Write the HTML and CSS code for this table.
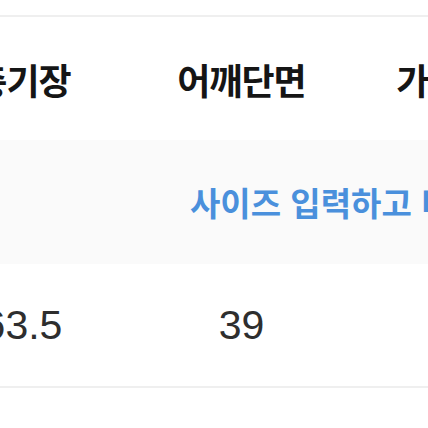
FILE: index.html
```html
<!DOCTYPE html>
<html lang="ko">
<head>
<meta charset="utf-8">
<link rel="stylesheet" href="styles.css">
</head>
<body>
<div class="page">
  <div class="top-space"></div>
  <div class="rule"></div>
  <div class="row head-row">
    <div class="cell">총기장</div>
    <div class="cell">어깨단면</div>
    <div class="cell">가슴단면</div>
  </div>
  <div class="banner">
    <span class="banner-text">사이즈 입력하고 비교하기</span>
  </div>
  <div class="row value-row">
    <div class="cell">63.5</div>
    <div class="cell">39</div>
    <div class="cell">48</div>
  </div>
  <div class="rule"></div>
</div>
</body>
</html>
```
FILE: styles.css
```css
html, body {
  margin: 0;
  padding: 0;
  background: #ffffff;
  width: 428px;
  height: 428px;
  overflow: hidden;
}
.page {
  width: 428px;
  overflow: hidden;
  display: flex;
  flex-direction: column;
}
.top-space {
  height: 15px;
}
.rule {
  height: 2px;
  background: #efefef;
  flex: none;
}
.row {
  display: flex;
  align-items: center;
  margin-left: -87px;
  white-space: nowrap;
}
.cell {
  flex: none;
  width: 219px;
  text-align: center;
}
.head-row {
  height: 123px;
  font-family: "Noto Sans CJK KR", "Noto Sans", sans-serif;
  font-weight: 700;
  font-size: 36px;
  color: #151515;
  letter-spacing: -1px;
}
.banner {
  height: 124px;
  background: #fafafa;
  display: flex;
  align-items: center;
  padding-left: 190px;
  white-space: nowrap;
  overflow: hidden;
}
.banner-text {
  font-family: "Noto Sans CJK KR", "Noto Sans", sans-serif;
  font-weight: 700;
  font-size: 33px;
  color: #4a90dc;
  letter-spacing: 0;
}
.value-row {
  height: 122px;
  font-family: "Liberation Sans", Arial, sans-serif;
  font-size: 41px;
  color: #2e2e2e;
}
```
